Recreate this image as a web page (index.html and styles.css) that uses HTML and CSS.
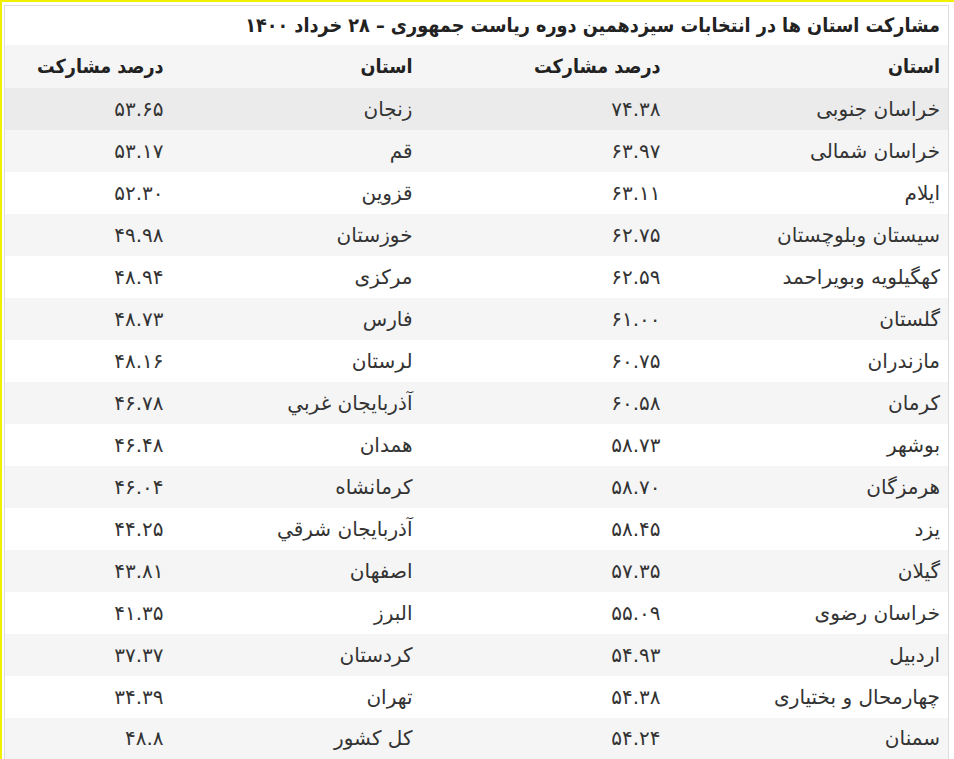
FILE: index.html
```html
<!DOCTYPE html>
<html lang="fa" dir="rtl">
<head>
<meta charset="utf-8">
<title>مشارکت استان ها</title>
<link rel="stylesheet" href="styles.css">
</head>
<body>
<div class="frame">
<table class="results">
<colgroup>
<col class="c1"><col class="c2"><col class="c3"><col class="c4">
</colgroup>
<thead>
<tr class="title-row"><th colspan="4">مشارکت استان ها در انتخابات سیزدهمین دوره ریاست جمهوری – ۲۸ خرداد ۱۴۰۰</th></tr>
<tr class="head-row"><th>استان</th><th>درصد مشارکت</th><th>استان</th><th>درصد مشارکت</th></tr>
</thead>
<tbody>
<tr class="hover"><td>خراسان جنوبی</td><td>۷۴.۳۸</td><td>زنجان</td><td>۵۳.۶۵</td></tr>
<tr><td>خراسان شمالی</td><td>۶۳.۹۷</td><td>قم</td><td>۵۳.۱۷</td></tr>
<tr><td>ایلام</td><td>۶۳.۱۱</td><td>قزوین</td><td>۵۲.۳۰</td></tr>
<tr><td>سیستان وبلوچستان</td><td>۶۲.۷۵</td><td>خوزستان</td><td>۴۹.۹۸</td></tr>
<tr><td>کهگیلویه وبویراحمد</td><td>۶۲.۵۹</td><td>مرکزی</td><td>۴۸.۹۴</td></tr>
<tr><td>گلستان</td><td>۶۱.۰۰</td><td>فارس</td><td>۴۸.۷۳</td></tr>
<tr><td>مازندران</td><td>۶۰.۷۵</td><td>لرستان</td><td>۴۸.۱۶</td></tr>
<tr><td>کرمان</td><td>۶۰.۵۸</td><td>آذربایجان غربي</td><td>۴۶.۷۸</td></tr>
<tr><td>بوشهر</td><td>۵۸.۷۳</td><td>همدان</td><td>۴۶.۴۸</td></tr>
<tr><td>هرمزگان</td><td>۵۸.۷۰</td><td>کرمانشاه</td><td>۴۶.۰۴</td></tr>
<tr><td>یزد</td><td>۵۸.۴۵</td><td>آذربایجان شرقي</td><td>۴۴.۲۵</td></tr>
<tr><td>گیلان</td><td>۵۷.۳۵</td><td>اصفهان</td><td>۴۳.۸۱</td></tr>
<tr><td>خراسان رضوی</td><td>۵۵.۰۹</td><td>البرز</td><td>۴۱.۳۵</td></tr>
<tr><td>اردبیل</td><td>۵۴.۹۳</td><td>کردستان</td><td>۳۷.۳۷</td></tr>
<tr><td>چهارمحال و بختیاری</td><td>۵۴.۳۸</td><td>تهران</td><td>۳۴.۳۹</td></tr>
<tr><td>سمنان</td><td>۵۴.۲۴</td><td>کل کشور</td><td>۴۸.۸</td></tr>
</tbody>
</table>
</div>
</body>
</html>
```
FILE: styles.css
```css
html, body {
  margin: 0;
  padding: 0;
  background: #ffffff;
}
body {
  font-family: "DejaVu Sans", sans-serif;
  color: #333333;
}
.frame {
  width: 954px;
  height: 759px;
  box-sizing: border-box;
  border-top: 2px solid #f0f000;
  border-left: 2px solid #f0f000;
  padding: 3px 5px 0 2px;
  overflow: hidden;
}
.results {
  width: 945px;
  border-collapse: collapse;
  border: 1px solid #dddddd;
  table-layout: fixed;
}
.c1 { width: 280px; }
.c2 { width: 248px; }
.c3 { width: 249px; }
.c4 { width: auto; }
.results th, .results td {
  text-align: right;
  padding: 0 8px;
  height: 42px;
  box-sizing: border-box;
  white-space: nowrap;
}
.title-row th {
  font-family: "DejaVu Sans Condensed", "DejaVu Sans", sans-serif;
  font-size: 19.6px;
  font-weight: bold;
  color: #222222;
  height: 39px;
  background: #ffffff;
}
.head-row th {
  font-family: "DejaVu Sans Condensed", "DejaVu Sans", sans-serif;
  font-size: 19.5px;
  font-weight: bold;
  color: #222222;
  height: 43px;
  background: #f5f5f5;
}
.results td {
  font-size: 20px;
  color: #333333;
}
.results tbody tr:nth-child(even) { background: #f5f5f5; }
.results tbody tr:nth-child(odd) { background: #ffffff; }
.results tbody tr.hover { background: #ebebeb; }
```
